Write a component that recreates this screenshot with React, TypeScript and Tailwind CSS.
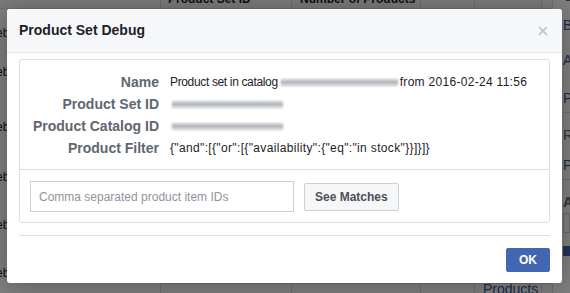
import { X } from "lucide-react";

const font = "font-['Liberation_Sans',Arial,sans-serif]";

const rows = [
  { label: "Name", kind: "name" },
  { label: "Product Set ID", kind: "blur" },
  { label: "Product Catalog ID", kind: "blur" },
  { label: "Product Filter", kind: "filter" },
];

function Smudge({ w }: { w: number }) {
  // redacted value in the screenshot
  return (
    <span className="inline-flex flex-col justify-center h-[22px] align-top" style={{ width: w }}>
      <span className="block h-[2px] bg-[#c4c7cb] blur-[1px]" />
      <span className="block h-[3px] bg-[#a3a7ad] blur-[1px]" />
      <span className="block h-[2px] bg-[#c4c7cb] blur-[1px]" />
    </span>
  );
}

function PageBehind() {
  return (
    <div className="flex h-full bg-white text-[12px] text-[#1d2129]">
      <div className="w-[161px] shrink-0 flex flex-col border-r border-[#dddfe2]">
        <div className="h-[9px] bg-[#f6f7f9] border-b border-[#dddfe2]" />
        <div className="-ml-[15px] leading-[14px]">
          <div className="mt-[17px]">Web</div>
          <div className="mt-[25px]">Web</div>
          <div className="mt-[41px]">Web</div>
          <div className="mt-[36px]">Web</div>
          <div className="mt-[34px]">Web</div>
          <div className="mt-[34px]">Web</div>
        </div>
      </div>
      <div className="flex-1 flex flex-col justify-between">
        <div className="flex h-[9px] bg-[#f6f7f9] border-b border-[#dddfe2] items-end text-[12px] font-bold leading-none whitespace-nowrap">
          <div className="w-[131px] border-r border-[#dddfe2] h-full pl-[7px] overflow-hidden">
            <div className="-mt-[7px]">Product Set ID</div>
          </div>
          <div className="w-[129px] border-r border-[#dddfe2] h-full pl-[8px] overflow-hidden">
            <div className="-mt-[7px]">Number of Products</div>
          </div>
          <div className="w-[54px] border-r border-[#dddfe2] h-full" />
          <div className="w-[67px] border-r border-[#dddfe2] h-full" />
          <div className="w-[11px] border-r border-[#dddfe2] h-full" />
        </div>
        <div className="flex h-[10px] items-start text-[14px] leading-none border-t border-[#dddfe2]">
          <div className="w-[131px] border-r border-[#dddfe2] h-full" />
          <div className="w-[129px] border-r border-[#dddfe2] h-full" />
          <div className="w-[54px] border-r border-[#dddfe2] h-full" />
          <div className="w-[67px] border-r border-[#dddfe2] h-full pl-[8px] text-[#365899] overflow-hidden">
            <div className="-mt-[2px]">Products</div>
          </div>
          <div className="w-[11px] border-r border-[#dddfe2] h-full" />
        </div>
      </div>
      <div className="w-[17px] shrink-0 flex flex-col pl-[10px] text-[14px] leading-[16px] text-[#365899] overflow-hidden">
        <div className="-mt-[12px]">C</div>
        <div className="mt-[13px]">B</div>
        <div className="mt-[19px]">A</div>
        <div className="mt-[22px]">P</div>
        <div className="-ml-[10px] mt-[6px] border-t border-[#dddfe2]" />
        <div className="mt-[14px] text-[#606770]">R</div>
        <div className="mt-[14px]">P</div>
        <div className="-ml-[10px] mt-[6px] border-t border-[#dddfe2]" />
        <div className="mt-[14px] text-[#606770] font-bold">A</div>
        <div className="mt-[3px] h-[20px] border border-[#ccd0d5] bg-white" />
        <div className="mt-[13px] h-[10px] bg-[#4267b2]" />
      </div>
    </div>
  );
}

export default function App() {
  return (
    <div className={`relative w-[570px] h-[293px] overflow-hidden ${font}`}>
      <PageBehind />
      <div className="absolute inset-0 bg-black/50" />

      <div className="absolute left-[7px] top-[9px] w-[555px] bg-white rounded-[3px] shadow-[0_2px_26px_rgba(0,0,0,0.3)] flex flex-col">
        <div className="h-[44px] flex items-center justify-between pl-[12px] pr-[12px] bg-[#f6f7f9] border-b border-[#e5e5e5] rounded-t-[3px]">
          <span className="text-[14px] font-bold text-[#1d2129]">Product Set Debug</span>
          <X size={14} strokeWidth={3} className="text-[#bec2c9]" />
        </div>

        <div className="px-[12px] pt-[6px] pb-[11px] flex flex-col">
          <div className="border border-[#dddfe2] rounded-[3px]">
            <div className="pt-[11px] pb-[10px] flex flex-col">
              {rows.map((r) => (
                <div key={r.label} className="flex h-[22px] items-center gap-[11px]">
                  <div className="w-[139px] text-right text-[14px] font-bold text-[#606770] whitespace-nowrap">
                    {r.label}
                  </div>
                  <div className="flex items-center text-[12px] text-[#1d2129] whitespace-nowrap">
                    {r.kind === "name" && (
                      <>
                        <span className="tracking-[-0.35px]">Product set in catalog</span>
                        <span className="ml-[3px]">
                          <Smudge w={117} />
                        </span>
                        <span className="ml-[2px] tracking-[0.3px]">from 2016-02-24 11:56</span>
                      </>
                    )}
                    {r.kind === "blur" && (
                      <span className="ml-[2px]">
                        <Smudge w={111} />
                      </span>
                    )}
                    {r.kind === "filter" && (
                      <span className="tracking-[0.35px]">
                        {'{"and":[{"or":[{"availability":{"eq":"in stock"}}]}]}'}
                      </span>
                    )}
                  </div>
                </div>
              ))}
            </div>

            <div className="border-t border-[#dddfe2] pl-[10px] pt-[11px] pb-[10px] flex items-center gap-[10px]">
              <input
                className="w-[264px] h-[31px] border border-[#ccd0d5] px-[8px] text-[12px] text-[#1d2129] placeholder:text-[#90949c] outline-none"
                placeholder="Comma separated product item IDs"
              />
              <button className="h-[28px] px-[10px] bg-[#f6f7f9] border border-[#ced0d4] rounded-[2px] text-[12px] font-bold text-[#4b4f56]">
                See Matches
              </button>
            </div>
          </div>

          <div className="mt-[12px] border-t border-[#dddfe2]" />

          <div className="pt-[12px] flex justify-end">
            <button className="w-[44px] h-[24px] bg-[#4267b2] border border-[#4267b2] rounded-[2px] text-[12px] font-bold text-white">
              OK
            </button>
          </div>
        </div>
      </div>
    </div>
  );
}
